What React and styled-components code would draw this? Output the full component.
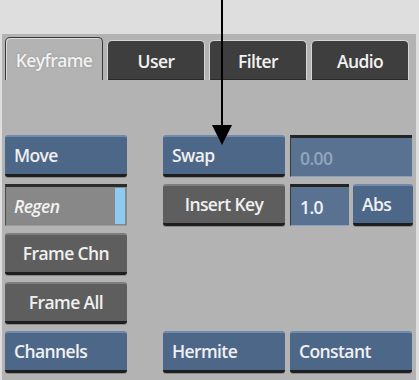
import React from 'react';
import styled, { createGlobalStyle } from 'styled-components';

const Global = createGlobalStyle`
  html, body { margin: 0; padding: 0; }
  body {
    background: #dedede;
    font-family: "Open Sans", "DejaVu Sans", sans-serif;
    width: 419px;
    height: 380px;
    overflow: hidden;
  }
`;

const Page = styled.div`
  position: relative;
  width: 419px;
  height: 380px;
  padding: 34px 3px 0 2px;
  box-sizing: border-box;
`;

const Panel = styled.div`
  background: #b3b3b3;
  height: 346px;
  padding: 3px 0 0 3px;
  box-sizing: border-box;
`;

const Tabs = styled.div`
  display: grid;
  grid-template-columns: repeat(4, 98px);
  column-gap: 4px;
  align-items: end;
  height: 43px;
`;

const Tab = styled.div`
  height: ${p => (p.$active ? 43 : 40)}px;
  box-sizing: border-box;
  display: flex;
  align-items: center;
  justify-content: center;
  font-size: 17.5px;
  font-weight: 600;
  letter-spacing: -0.6px;
  color: #f2f2f2;
  border-radius: 5px 5px 0 0;
  background: ${p => (p.$active ? '#b3b3b3' : '#3e3e3e')};
  border: 1px solid ${p => (p.$active ? '#3a3a3a' : '#d6d6d6')};
  border-bottom: none;
  box-shadow: ${p => (p.$active ? 'inset 1px 1px 0 #d8d8d8' : 'inset 0 -1px 0 #2a2a2a')};
  text-shadow: ${p => (p.$active ? '0 0 2px #8a8a8a' : 'none')};
  padding-top: ${p => (p.$active ? 2 : 0)}px;
`;

const Grid = styled.div`
  display: grid;
  grid-template-columns: 158px 127px 122px;
  grid-template-rows: repeat(5, 42px);
  row-gap: 7px;
  margin-top: 55px;
  & > * { width: 122px; }
`;

const Pair = styled.div`
  display: grid;
  grid-template-columns: 59px 60px;
  column-gap: 4px;
`;

const Button = styled.div`
  box-sizing: border-box;
  height: 42px;
  display: flex;
  align-items: center;
  justify-content: ${p => (p.$tone === 'blue' ? 'flex-start' : 'center')};
  padding: 0 ${p => (p.$tone === 'blue' ? 9 : 0)}px 2px;
  font-size: 17.5px;
  font-weight: 600;
  letter-spacing: -0.6px;
  color: #f0f0f0;
  border-radius: 3px;
  background: ${p => (p.$tone === 'blue' ? '#4d6789' : '#5e5e5e')};
  border-top: 2px solid ${p => (p.$tone === 'blue' ? '#7189aa' : '#7e7e7e')};
  border-bottom: 3px solid #1e1e1e;
  box-shadow: 0 1px 0 #8a8a8a;
`;

const Field = styled.div`
  box-sizing: border-box;
  height: 42px;
  display: flex;
  align-items: center;
  padding: 2px 9px 0;
  font-size: 17.5px;
  font-weight: 600;
  letter-spacing: -0.6px;
  color: ${p => (p.$dim ? '#95a5ba' : '#eef2f6')};
  background: #5a7292;
  border-top: 3px solid #242424;
  border-left: 1px solid #3a3a3a;
  border-bottom: 1px solid #8aa0bc;
`;

const Toggle = styled.div`
  box-sizing: border-box;
  height: 42px;
  display: flex;
  align-items: center;
  justify-content: space-between;
  padding: 0 2px 0 8px;
  font-size: 17.5px;
  font-weight: 600;
  font-style: italic;
  letter-spacing: -0.6px;
  color: #f2f2f2;
  background: #888888;
  border-top: 3px solid #2c2c2c;
  border-left: 1px solid #4a4a4a;
  border-bottom: 1px solid #9a9a9a;
`;

const Indicator = styled.span`
  width: 10px;
  height: 36px;
  background: #8fcaf2;
`;

const Empty = styled.div``;

const Arrow = styled.svg`
  position: absolute;
  left: 210px;
  top: 0;
`;

export default function App() {
  return (
    <Page>
      <Global />
      <Panel>
        <Tabs>
          <Tab $active>Keyframe</Tab>
          <Tab>User</Tab>
          <Tab>Filter</Tab>
          <Tab>Audio</Tab>
        </Tabs>
        <Grid>
          <Button $tone="blue">Move</Button>
          <Button $tone="blue">Swap</Button>
          <Field $dim>0.00</Field>

          <Toggle>Regen<Indicator /></Toggle>
          <Button>Insert Key</Button>
          <Pair>
            <Field>1.0</Field>
            <Button $tone="blue">Abs</Button>
          </Pair>

          <Button>Frame Chn</Button>
          <Empty />
          <Empty />

          <Button>Frame All</Button>
          <Empty />
          <Empty />

          <Button $tone="blue">Channels</Button>
          <Button $tone="blue">Hermite</Button>
          <Button $tone="blue">Constant</Button>
        </Grid>
      </Panel>
      <Arrow width="24" height="146" viewBox="0 0 24 146">
        <line x1="12" y1="0" x2="12" y2="128" stroke="#000" strokeWidth="2" />
        <polygon points="2,125 22,125 12,145" fill="#000" />
      </Arrow>
    </Page>
  );
}
